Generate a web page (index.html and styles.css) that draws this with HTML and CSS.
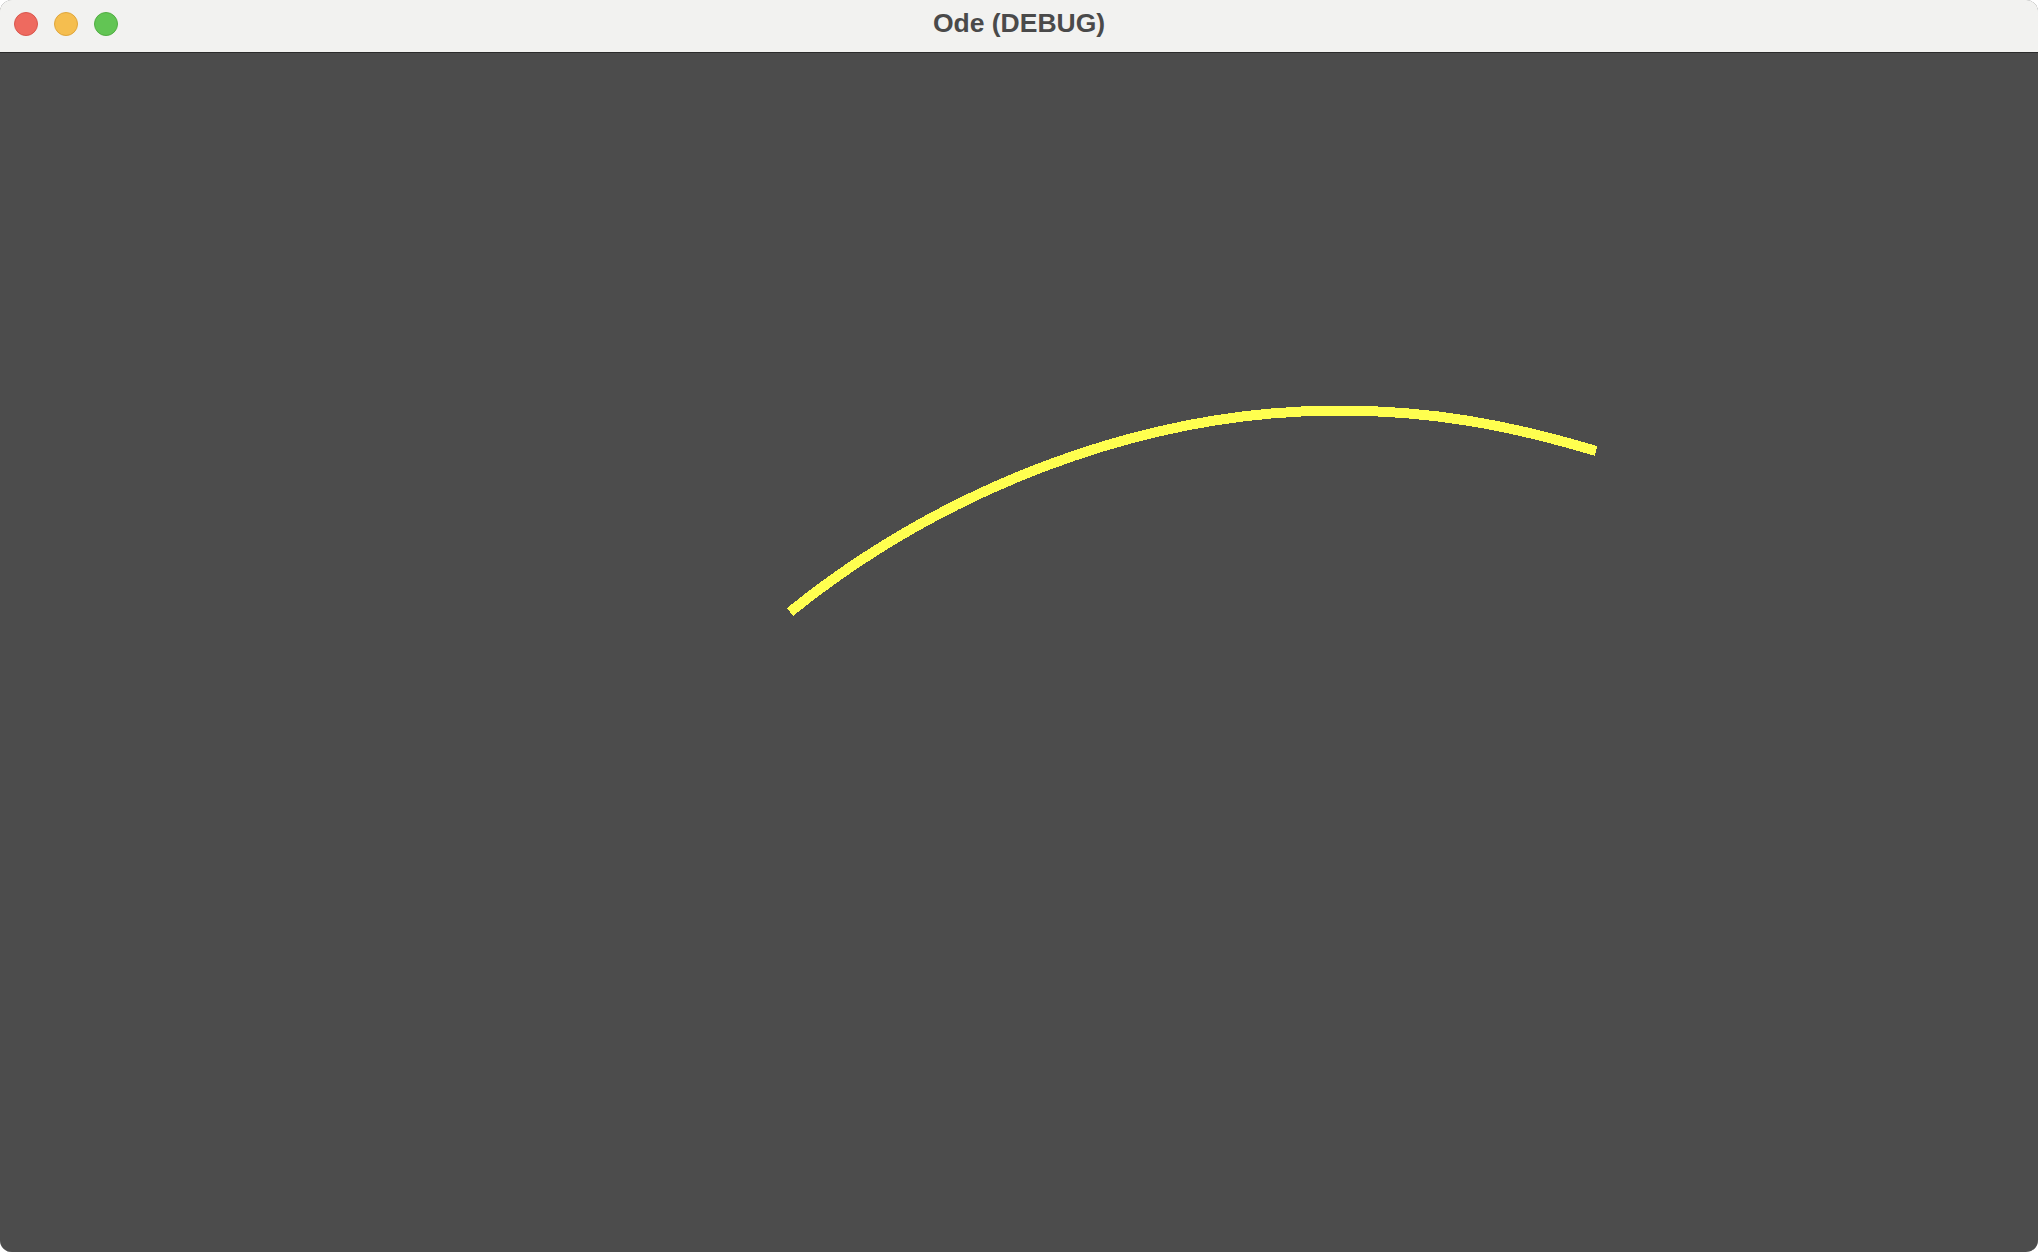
FILE: index.html
```html
<!DOCTYPE html>
<html>
<head>
<meta charset="utf-8">
<title>Ode (DEBUG)</title>
<link rel="stylesheet" href="styles.css">
</head>
<body>
<div class="window">
  <div class="titlebar">
    <div class="lights">
      <span class="light red"></span>
      <span class="light yellow"></span>
      <span class="light green"></span>
    </div>
    <div class="title">Ode (DEBUG)</div>
  </div>
  <div class="canvas">
    <svg class="plot" width="2038" height="1199" viewBox="0 53 2038 1199" xmlns="http://www.w3.org/2000/svg">
      <path class="curve" d="M790 612 C940 491 1139 410.5 1339 410.5 C1429 410.5 1506 424 1596 451"/>
    </svg>
  </div>
</div>
</body>
</html>
```
FILE: styles.css
```css
html, body {
  margin: 0;
  padding: 0;
  background: #ffffff;
}
body {
  width: 2038px;
  height: 1252px;
  overflow: hidden;
}
.window {
  width: 2038px;
  height: 1252px;
  border-radius: 12px;
  overflow: hidden;
  display: flex;
  flex-direction: column;
  background: #4c4c4c;
  box-shadow: inset 0 0 0 1px #c8c8c8;
}
.titlebar {
  height: 52px;
  flex: 0 0 52px;
  background: #f2f2f0;
  border-bottom: 1px solid #2b2b2b;
  position: relative;
  display: flex;
  align-items: center;
  justify-content: center;
}
.lights {
  position: absolute;
  left: 14px;
  top: 12px;
  display: flex;
  gap: 16px;
}
.light {
  width: 24px;
  height: 24px;
  border-radius: 50%;
  box-sizing: border-box;
}
.red { background: #ee6a5f; border: 1px solid #d9574d; }
.yellow { background: #f5be4f; border: 1px solid #dfa63c; }
.green { background: #62c554; border: 1px solid #52ad43; }
.title {
  font-family: "Liberation Sans", Arial, sans-serif;
  font-weight: bold;
  font-size: 26.5px;
  color: #4a4a4a;
  margin-top: -6px;
}
.canvas {
  flex: 1;
  background: #4c4c4c;
  position: relative;
}
.plot {
  display: block;
}
.curve {
  fill: none;
  stroke: #ffff4f;
  stroke-width: 10;
  stroke-linecap: butt;
  shape-rendering: crispEdges;
}
```
